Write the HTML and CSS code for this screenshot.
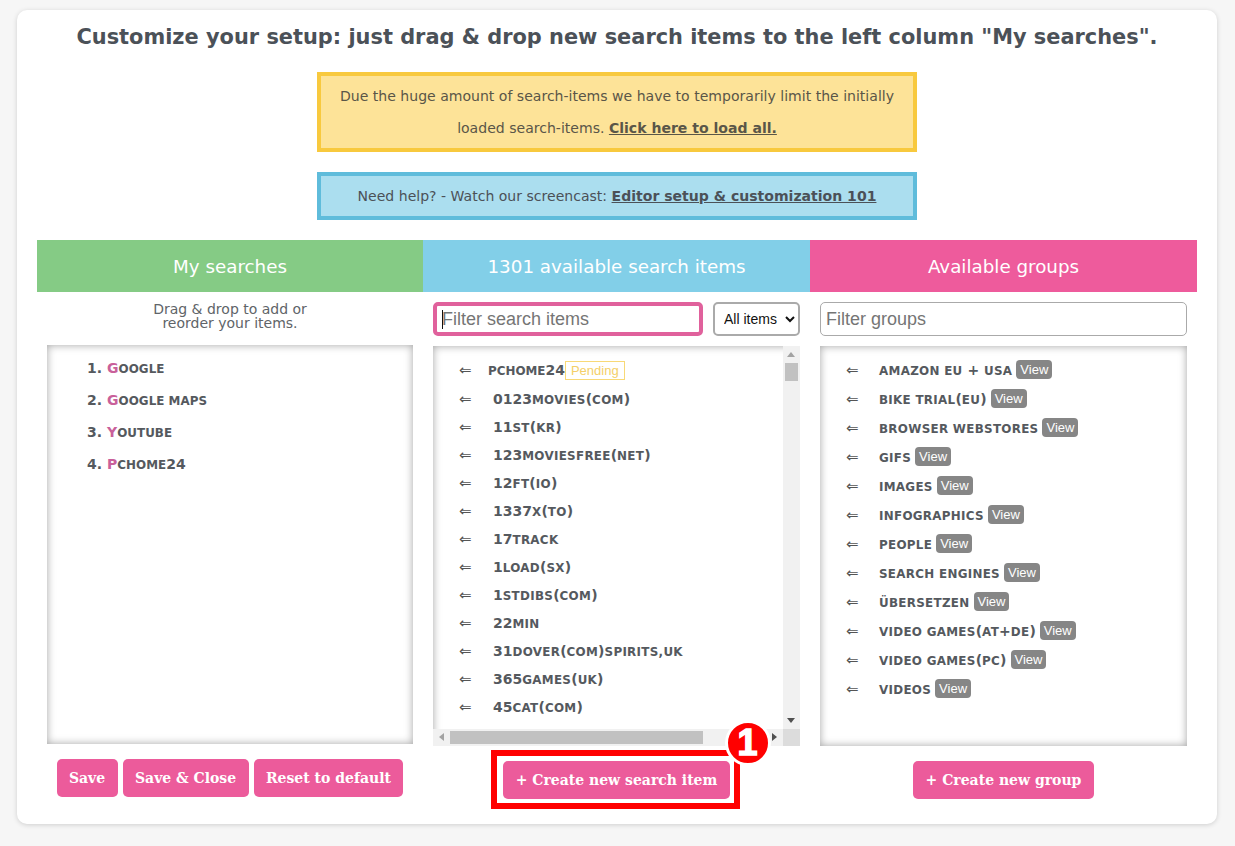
FILE: index.html
```html
<!DOCTYPE html>
<html lang="en">
<head>
<meta charset="utf-8">
<title>Customize your setup</title>
<link rel="stylesheet" href="styles.css">
</head>
<body>
<main class="card">
  <h1 class="title">Customize your setup: just drag &amp; drop new search items to the left column "My searches".</h1>
  <p class="notice notice-yellow">Due the huge amount of search-items we have to temporarily limit the initially loaded search-items. <a href="#">Click here to load all.</a></p>
  <p class="notice notice-blue">Need help? - Watch our screencast: <a href="#">Editor setup &amp; customization 101</a></p>

  <div class="columns">
    <section class="col">
      <h2 class="col-head head-green">My searches</h2>
      <div class="col-tools tools-text">Drag &amp; drop to add or<br>reorder your items.</div>
      <div class="panel panel-left">
        <ol class="my-list">
          <li><span class="initial">G</span><span class="sc">oogle</span></li>
          <li><span class="initial">G</span><span class="sc">oogle maps</span></li>
          <li><span class="initial">Y</span><span class="sc">outube</span></li>
          <li><span class="initial">P</span><span class="sc">chome</span>24</li>
        </ol>
      </div>
      <div class="col-foot">
        <button class="btn">Save</button>
        <button class="btn">Save &amp; Close</button>
        <button class="btn">Reset to default</button>
      </div>
    </section>

    <section class="col">
      <h2 class="col-head head-blue">1301 available search items</h2>
      <div class="col-tools">
        <div class="filter-wrap">
          <input class="filter filter-focus" type="text" placeholder="Filter search items">
          <span class="caret"></span>
        </div>
        <select class="kind"><option>All items</option></select>
      </div>
      <div class="panel panel-scroll">
        <div class="panel-view">
          <ul class="items">
            <li class="first"><span class="arrow">⇐</span><span class="name"><span class="sc">pchome</span>24</span><span class="pending">Pending</span></li>
            <li><span class="arrow">⇐</span><span class="name">0123<span class="sc">movies</span>(<span class="sc">com</span>)</span></li>
            <li><span class="arrow">⇐</span><span class="name">11<span class="sc">st</span>(<span class="sc">kr</span>)</span></li>
            <li><span class="arrow">⇐</span><span class="name">123<span class="sc">moviesfree</span>(<span class="sc">net</span>)</span></li>
            <li><span class="arrow">⇐</span><span class="name">12<span class="sc">ft</span>(<span class="sc">io</span>)</span></li>
            <li><span class="arrow">⇐</span><span class="name">1337<span class="sc">x</span>(<span class="sc">to</span>)</span></li>
            <li><span class="arrow">⇐</span><span class="name">17<span class="sc">track</span></span></li>
            <li><span class="arrow">⇐</span><span class="name">1<span class="sc">load</span>(<span class="sc">sx</span>)</span></li>
            <li><span class="arrow">⇐</span><span class="name">1<span class="sc">stdibs</span>(<span class="sc">com</span>)</span></li>
            <li><span class="arrow">⇐</span><span class="name">22<span class="sc">min</span></span></li>
            <li><span class="arrow">⇐</span><span class="name">31<span class="sc">dover</span>(<span class="sc">com</span>)<span class="sc">spirits,uk</span></span></li>
            <li><span class="arrow">⇐</span><span class="name">365<span class="sc">games</span>(<span class="sc">uk</span>)</span></li>
            <li><span class="arrow">⇐</span><span class="name">45<span class="sc">cat</span>(<span class="sc">com</span>)</span></li>
          </ul>
        </div>
        <div class="vbar">
          <span class="tri tri-up"></span>
          <span class="vthumb"></span>
          <span class="tri tri-down"></span>
        </div>
        <div class="hbar">
          <span class="tri tri-left"></span>
          <span class="hthumb"></span>
          <span class="tri tri-right"></span>
        </div>
        <div class="corner"></div>
      </div>
      <div class="col-foot foot-shift">
        <div class="highlight">
          <button class="btn">+ Create new search item</button>
          <svg class="step" width="46" height="46" viewBox="0 0 46 46" role="img" aria-label="Step 1">
            <circle cx="23" cy="23" r="21.5" fill="#f00" stroke="#fff" stroke-width="3"/>
            <text x="22.5" y="35" text-anchor="middle" class="step-num">1</text>
          </svg>
        </div>
      </div>
    </section>

    <section class="col">
      <h2 class="col-head head-pink">Available groups</h2>
      <div class="col-tools">
        <input class="filter" type="text" placeholder="Filter groups">
      </div>
      <div class="panel">
        <ul class="items groups">
          <li><span class="arrow">⇐</span><span class="name"><span class="sc">amazon eu</span> + <span class="sc">usa</span></span><span class="view">View</span></li>
          <li><span class="arrow">⇐</span><span class="name"><span class="sc">bike trial</span>(<span class="sc">eu</span>)</span><span class="view">View</span></li>
          <li><span class="arrow">⇐</span><span class="name"><span class="sc">browser webstores</span></span><span class="view">View</span></li>
          <li><span class="arrow">⇐</span><span class="name"><span class="sc">gifs</span></span><span class="view">View</span></li>
          <li><span class="arrow">⇐</span><span class="name"><span class="sc">images</span></span><span class="view">View</span></li>
          <li><span class="arrow">⇐</span><span class="name"><span class="sc">infographics</span></span><span class="view">View</span></li>
          <li><span class="arrow">⇐</span><span class="name"><span class="sc">people</span></span><span class="view">View</span></li>
          <li><span class="arrow">⇐</span><span class="name"><span class="sc">search engines</span></span><span class="view">View</span></li>
          <li><span class="arrow">⇐</span><span class="name"><span class="sc">übersetzen</span></span><span class="view">View</span></li>
          <li><span class="arrow">⇐</span><span class="name"><span class="sc">video games</span>(<span class="sc">at</span>+<span class="sc">de</span>)</span><span class="view">View</span></li>
          <li><span class="arrow">⇐</span><span class="name"><span class="sc">video games</span>(<span class="sc">pc</span>)</span><span class="view">View</span></li>
          <li><span class="arrow">⇐</span><span class="name"><span class="sc">videos</span></span><span class="view">View</span></li>
        </ul>
      </div>
      <div class="col-foot">
        <button class="btn">+ Create new group</button>
      </div>
    </section>
  </div>
</main>
</body>
</html>
```
FILE: styles.css
```css
* { box-sizing: border-box; }
html, body { margin: 0; height: 846px; overflow: hidden; }
body {
  background: #f6f6f6;
  color: #4b5158;
  font-family: "DejaVu Sans", Verdana, sans-serif;
  padding: 10px 18px 22px 17px;
}
.card {
  background: #fff;
  border-radius: 10px;
  box-shadow: 0 1px 5px rgba(0, 0, 0, .16);
  height: 814px;
  padding: 0 20px;
}
.title {
  margin: 0;
  padding-top: 14px;
  height: 62px;
  font-size: 20.9px;
  line-height: 26px;
  font-weight: 700;
  text-align: center;
  white-space: nowrap;
}
.notice {
  width: 600px;
  margin: 0 auto 20px;
  border: 4px solid;
  text-align: center;
  font-size: 14.05px;
}
.notice a { color: inherit; font-weight: 700; }
.notice-yellow {
  background: #fde398;
  border-color: #f8c93e;
  padding: 4px 16px 0;
  line-height: 32px;
  height: 80px;
  color: #5a5648;
}
.notice-blue {
  background: #abdeef;
  border-color: #5fbcdb;
  line-height: 40px;
  height: 48px;
}
.columns { display: grid; grid-template-columns: 386px 387px 387px; }
.col { display: flex; flex-direction: column; align-items: center; min-width: 0; }
.col-head {
  align-self: stretch;
  margin: 0;
  height: 52px;
  padding-top: 1px;
  color: #fff;
  font-size: 18.3px;
  font-weight: 400;
  line-height: 52px;
  text-align: center;
}
.head-green { background: #85cb85; }
.head-blue { background: #82cfe8; }
.head-pink { background: #ee5b9c; }
.col-tools {
  display: flex;
  gap: 10px;
  align-self: stretch;
  height: 54px;
  padding: 10px 10px 0;
}
.tools-text {
  display: block;
  height: 53px;
  padding-top: 10px;
  font-size: 14px;
  line-height: 14px;
  text-align: center;
  color: #606468;
}
.filter-wrap { position: relative; width: 270px; }
.filter {
  width: 100%;
  height: 34px;
  padding: 1px 5px;
  border: 1px solid #aaa;
  border-radius: 5px;
  background: #fff;
  font-family: "Liberation Sans", Arial, sans-serif;
  font-size: 18px;
  outline: 0;
}
.filter::placeholder { color: #757575; opacity: 1; }
.filter-focus { border: 4px solid #e0619c; padding: 0 5px; }
.caret {
  position: absolute;
  left: 9px;
  top: 8px;
  width: 1px;
  height: 19px;
  background: #111;
}
.kind {
  width: 87px;
  height: 34px;
  padding: 0 0 0 5px;
  border: 2px solid #aaa;
  border-radius: 5px;
  background: #fff;
  color: #111;
  font-family: "Liberation Sans", Arial, sans-serif;
  font-size: 14px;
}
.panel {
  align-self: stretch;
  height: 400px;
  margin: 0 10px;
  background: #fff;
  box-shadow: inset 0 0 9px rgba(0, 0, 0, .36);
  overflow: hidden;
}
.panel-left { height: 399px; }
.panel-scroll {
  display: grid;
  grid-template-columns: 350px 17px;
  grid-template-rows: 383px 17px;
}
.panel-view { overflow: hidden; }
.my-list {
  margin: 0;
  padding: 7px 0 0 60px;
  font-size: 14px;
  font-weight: 700;
  color: #55595e;
}
.my-list li { height: 32px; line-height: 32px; }
.my-list .initial { color: #c9609a; }
.sc { font-size: 11.9px; text-transform: uppercase; letter-spacing: .3px; }
.my-list .sc { letter-spacing: .05px; }
.items {
  margin: 0;
  padding: 10px 0 0 26px;
  list-style: none;
  white-space: nowrap;
  font-size: 14px;
}
.items li {
  display: flex;
  align-items: center;
  height: 28px;
  color: #55595e;
}
.items .first { margin-bottom: 1px; }
.items .first .name { margin-left: -5px; }
.items .first .sc { letter-spacing: 0; }
.arrow { width: 34px; font-size: 15px; font-weight: 400; color: #555; }
.name { font-weight: 700; }
.pending {
  height: 19px;
  padding: 0 5px;
  border: 1px solid #f8d977;
  color: #f4cf68;
  font-family: "Liberation Sans", Arial, sans-serif;
  font-size: 13px;
  line-height: 17px;
}
.groups { padding-top: 9px; }
.groups li { height: 29px; }
.groups .arrow { width: 33px; }
.view {
  margin-left: 4px;
  padding: 0 4px;
  height: 19px;
  border-radius: 4px;
  background: #868686;
  color: #fff;
  font-family: "Liberation Sans", Arial, sans-serif;
  font-size: 13px;
  line-height: 19px;
}
.vbar { position: relative; background: #f1f1f1; }
.vthumb { position: absolute; top: 17px; left: 2px; width: 13px; height: 18px; background: #c1c1c1; }
.hbar { position: relative; background: #f1f1f1; }
.hthumb { position: absolute; left: 17px; top: 2px; width: 253px; height: 13px; background: #c1c1c1; }
.corner { background: #dcdcdc; }
.tri { position: absolute; width: 0; height: 0; border: 4px solid transparent; }
.tri-up { top: 6px; left: 4px; border-width: 0 4.5px 5px; border-bottom-color: #a3a3a3; }
.tri-down { bottom: 6px; left: 4px; border-width: 5px 4.5px 0; border-top-color: #505050; }
.tri-left { left: 6px; top: 4px; border-width: 4.5px 5px 4.5px 0; border-right-color: #a3a3a3; }
.tri-right { right: 6px; top: 4px; border-width: 4.5px 0 4.5px 5px; border-left-color: #505050; }
.col-foot {
  display: flex;
  justify-content: center;
  gap: 5px;
  padding-top: 15px;
}
.foot-shift { padding-right: 2px; }
.btn {
  height: 38px;
  padding: 0 12.4px;
  border: 0;
  border-radius: 5px;
  background: #ec5b9b;
  color: #fff;
  font-family: "DejaVu Serif", Verdana, serif;
  font-size: 14px;
  font-weight: 700;
}
.highlight {
  position: relative;
  margin-top: -11px;
  padding: 5px 4px 4px 6px;
  border: 6px solid #f00;
}
.highlight .btn { display: block; }
.step { position: absolute; right: -37px; top: -36px; }
.step-num {
  fill: #fff;
  stroke: #fff;
  stroke-width: 1.5px;
  font-family: "Liberation Sans", Arial, sans-serif;
  font-size: 36px;
  font-weight: 700;
}
```
